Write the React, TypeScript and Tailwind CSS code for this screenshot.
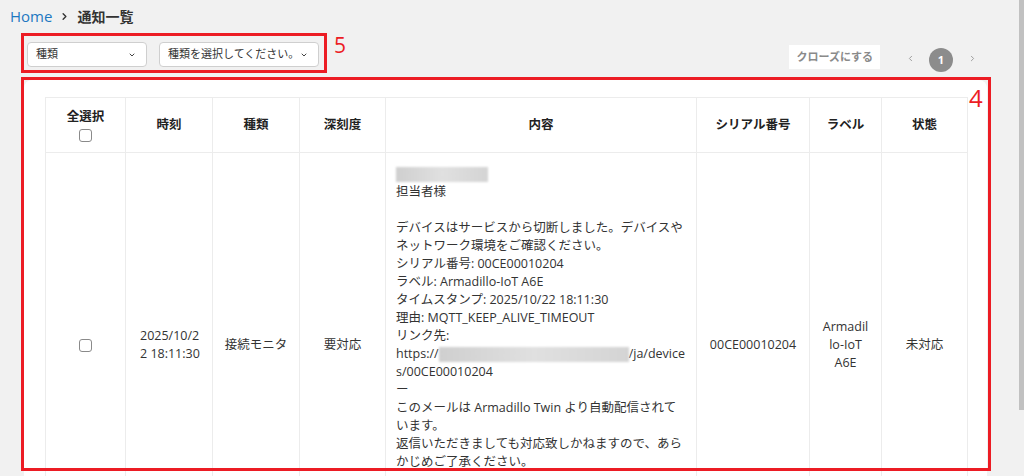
import { ChevronDown, ChevronLeft, ChevronRight } from 'lucide-react';

const font = "font-['Open_Sans','Noto_Sans_CJK_JP',sans-serif]";

function Box() {
  return <span className="inline-block w-[13px] h-[13px] rounded-[3px] border border-[#8a8a8a] bg-white align-middle" />;
}

function Blur({ w }: { w: string }) {
  return (
    <span
      className={`inline-block ${w} h-[15px] align-middle bg-gradient-to-r from-[#cfcfcf] via-[#e0e0e0] to-[#d4d4d4] blur-[0.8px]`}
    />
  );
}

function Select({ label, width }: { label: string; width: string }) {
  return (
    <div
      className={`${width} h-[25px] flex items-center justify-between pl-[8px] pr-[10px] bg-white border border-[#cfcfcf] rounded-[4px] text-[11px] text-[#333]`}
    >
      <span>{label}</span>
      <ChevronDown size={8} strokeWidth={3} className="text-[#444]" />
    </div>
  );
}

const headers = ['時刻', '種類', '深刻度', '内容', 'シリアル番号', 'ラベル', '状態'];

export default function App() {
  return (
    <div className={`flex h-[476px] overflow-hidden bg-[#f1f1f1] ${font}`}>
      <div className="flex-1 min-w-0">
        {/* Breadcrumb */}
        <div className="h-[33px] flex items-center gap-[7px] pl-[10px]">
          <span className="text-[15px] text-[#1d78c1]">Home</span>
          <ChevronRight size={11} strokeWidth={3} className="text-[#333]" />
          <span className="text-[14px] font-semibold text-[#333]">通知一覧</span>
        </div>

        {/* Toolbar */}
        <div className="flex items-start h-[47px] pl-[21px] pr-[40px]">
          <div className="flex items-start">
            <div className="h-[40px] border-[3px] border-[#ec1c24] flex items-start gap-[12px] pl-[3px] pr-[5px] pt-[6px]">
              <Select label="種類" width="w-[120px]" />
              <Select label="種類を選択してください。" width="w-[160px]" />
            </div>
            <span className="ml-[7px] text-[21px] leading-[24px] text-[#ec1c24]">5</span>
          </div>
          <div className="ml-auto flex items-center pt-[9px]">
            <div className="h-[24px] px-[7px] flex items-center bg-white text-[11px] font-semibold text-[#8a8a8a]">
              クローズにする
            </div>
            <ChevronLeft size={9} strokeWidth={2.5} className="ml-[26px] mt-[3px] text-[#999]" />
            <div className="ml-[14px] mt-[6px] w-[24px] h-[24px] rounded-full bg-[#8c8c8c] flex items-center justify-center text-[11px] font-bold text-white">
              1
            </div>
            <ChevronRight size={9} strokeWidth={2.5} className="ml-[15px] mt-[3px] text-[#999]" />
          </div>
        </div>

        {/* Card */}
        <div className="relative ml-[24px] w-[963px] h-[420px] bg-white rounded-t-[8px] pt-[17px] pl-[21px] pr-[19px]">
          <table className="table-fixed w-[922px] border-collapse text-[12.5px] text-[#333]">
            <colgroup>
              <col className="w-[80px]" />
              <col className="w-[87px]" />
              <col className="w-[87px]" />
              <col className="w-[86px]" />
              <col className="w-[311px]" />
              <col className="w-[113px]" />
              <col className="w-[72px]" />
              <col className="w-[86px]" />
            </colgroup>
            <thead>
              <tr className="h-[55px]">
                <th className="border border-[#ececec] text-center align-middle font-bold text-[#222]">
                  <div className="leading-[18px]">全選択</div>
                  <div className="leading-[13px] mt-[1px]">
                    <Box />
                  </div>
                </th>
                {headers.map((h) => (
                  <th key={h} className="border border-[#ececec] text-center align-middle font-bold text-[#222]">
                    {h}
                  </th>
                ))}
              </tr>
            </thead>
            <tbody>
              <tr className="leading-[18px]">
                <td className="border border-[#ececec] text-center align-middle">
                  <Box />
                </td>
                <td className="border border-[#ececec] align-middle pl-[14px] pr-[10px] break-all">
                  2025/10/22 18:11:30
                </td>
                <td className="border border-[#ececec] text-center align-middle px-[8px]">接続モニタ</td>
                <td className="border border-[#ececec] text-center align-middle px-[8px]">要対応</td>
                <td className="border border-[#ececec] align-top pl-[10px] pr-[10px] pt-[12px] pb-[12px] break-all">
                  <div className="h-[18px] flex items-center">
                    <Blur w="w-[92px]" />
                  </div>
                  <div>担当者様</div>
                  <div className="h-[18px]" />
                  <div>デバイスはサービスから切断しました。デバイスやネットワーク環境をご確認ください。</div>
                  <div>シリアル番号: 00CE00010204</div>
                  <div>ラベル: Armadillo-IoT A6E</div>
                  <div>タイムスタンプ: 2025/10/22 18:11:30</div>
                  <div>理由: MQTT_KEEP_ALIVE_TIMEOUT</div>
                  <div>リンク先:</div>
                  <div>
                    https://<Blur w="w-[190px]" />/ja/devices/00CE00010204
                  </div>
                  <div>ー</div>
                  <div>このメールは Armadillo Twin より自動配信されています。</div>
                  <div>返信いただきましても対応致しかねますので、あらかじめご了承ください。</div>
                  <div className="h-[18px]" />
                  <div>Armadillo Twin サポート</div>
                  <div className="h-[18px]" />
                </td>
                <td className="border border-[#ececec] text-center align-middle px-[8px]">00CE00010204</td>
                <td className="border border-[#ececec] text-center align-middle px-[12px] [overflow-wrap:anywhere]">
                  Armadillo-IoT A6E
                </td>
                <td className="border border-[#ececec] text-center align-middle px-[8px]">未対応</td>
              </tr>
            </tbody>
          </table>

          {/* Annotation 4 */}
          <div className="absolute left-[-3px] top-[-3px] w-[970px] h-[394px] border-[3px] border-[#ec1c24] pointer-events-none" />
          <span className="absolute left-[945px] top-[4px] text-[24px] leading-[28px] text-[#ec1c24]">4</span>
        </div>
      </div>

      {/* Scrollbar */}
      <div className="w-[7px] bg-[#f1f1f1] flex justify-end">
        <div className="w-[5px] h-[410px] bg-[#c1c1c1]" />
      </div>
    </div>
  );
}
